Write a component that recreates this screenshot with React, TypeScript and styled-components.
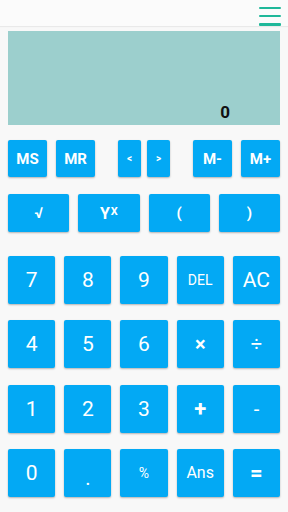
import React from "react";
import styled, { createGlobalStyle } from "styled-components";

const GlobalStyle = createGlobalStyle`
  html, body {
    margin: 0;
    padding: 0;
    background: #f8f8f8;
    font-family: Roboto, "Noto Sans", sans-serif;
  }
`;

const Screen = styled.div`
  width: 288px;
  height: 512px;
  display: flex;
  flex-direction: column;
  background: #f8f8f8;
`;

const TopBar = styled.div`
  height: 26px;
  display: flex;
  justify-content: flex-end;
  align-items: center;
  padding: 0 7px;
  background: #fbfbfb;
  box-shadow: 0 1px 1px rgba(0, 0, 0, 0.06);
`;

const MenuButton = styled.div`
  width: 22px;
  height: 19px;
  display: flex;
  flex-direction: column;
  justify-content: space-between;
  margin-top: 6px;

  span {
    display: block;
    height: 2.6px;
    border-radius: 1px;
    background: #1fb89a;
  }
`;

const Body = styled.div`
  padding: 0 8px;
  display: flex;
  flex-direction: column;
`;

const Display = styled.div`
  margin-top: 5px;
  height: 94px;
  background: #9ccfcd;
  display: flex;
  justify-content: flex-end;
  align-items: flex-end;
  padding: 0 50px 3px 0;
  box-sizing: border-box;
  font-size: 17px;
  font-weight: 700;
  color: #111;
`;

const MemoryRow = styled.div`
  margin-top: 15px;
  height: 37px;
  display: flex;
  justify-content: space-between;
`;

const Group = styled.div<{ $gap: number }>`
  display: flex;
  gap: ${(p) => p.$gap}px;
`;

const FuncRow = styled.div`
  margin-top: 17px;
  height: 38px;
  display: grid;
  grid-template-columns: repeat(4, 1fr);
  gap: 9px;
`;

const Keypad = styled.div`
  margin-top: 24px;
  display: grid;
  grid-template-columns: repeat(5, 1fr);
  grid-auto-rows: 48px;
  column-gap: 9px;
  row-gap: 16.3px;
`;

const Key = styled.button<{ $size?: number; $bold?: boolean; $w?: number }>`
  border: none;
  margin: 0;
  padding: 0;
  border-radius: 2px;
  background: #03a9f4;
  color: #fff;
  font-family: Roboto, "Noto Sans", sans-serif;
  font-size: ${(p) => p.$size ?? 21}px;
  font-weight: ${(p) => (p.$bold ? 700 : 400)};
  width: ${(p) => (p.$w ? `${p.$w}px` : "auto")};
  height: 100%;
  display: flex;
  align-items: center;
  justify-content: center;
  box-shadow: 0 1px 2px rgba(0, 0, 0, 0.28);
`;

const Sup = styled.sup`
  font-size: 11px;
  position: relative;
  top: -2px;
  margin-left: 1px;
`;

const Dot = styled.span`
  position: relative;
  top: 5px;
`;

const keys: { label: React.ReactNode; size?: number; bold?: boolean }[] = [
  { label: "7" },
  { label: "8" },
  { label: "9" },
  { label: "DEL", size: 14 },
  { label: "AC" },
  { label: "4" },
  { label: "5" },
  { label: "6" },
  { label: "×", size: 20, bold: true },
  { label: "÷", size: 20 },
  { label: "1" },
  { label: "2" },
  { label: "3" },
  { label: "+", size: 22, bold: true },
  { label: "-", size: 20 },
  { label: "0" },
  { label: <Dot>.</Dot>, size: 20 },
  { label: "%", size: 14 },
  { label: "Ans", size: 16 },
  { label: "=", size: 22, bold: true },
];

export default function App() {
  return (
    <Screen>
      <GlobalStyle />
      <TopBar>
        <MenuButton>
          <span />
          <span />
          <span />
        </MenuButton>
      </TopBar>
      <Body>
        <Display>0</Display>
        <MemoryRow>
          <Group $gap={9}>
            <Key $w={39} $size={15} $bold>MS</Key>
            <Key $w={39} $size={15} $bold>MR</Key>
          </Group>
          <Group $gap={6}>
            <Key $w={23} $size={10} $bold>&lt;</Key>
            <Key $w={23} $size={10} $bold>&gt;</Key>
          </Group>
          <Group $gap={9}>
            <Key $w={39} $size={15} $bold>M-</Key>
            <Key $w={39} $size={15} $bold>M+</Key>
          </Group>
        </MemoryRow>
        <FuncRow>
          <Key $size={15} $bold>√</Key>
          <Key $size={16} $bold>
            Y<Sup>X</Sup>
          </Key>
          <Key $size={15} $bold>(</Key>
          <Key $size={15} $bold>)</Key>
        </FuncRow>
        <Keypad>
          {keys.map((k, i) => (
            <Key key={i} $size={k.size} $bold={k.bold}>
              {k.label}
            </Key>
          ))}
        </Keypad>
      </Body>
    </Screen>
  );
}
